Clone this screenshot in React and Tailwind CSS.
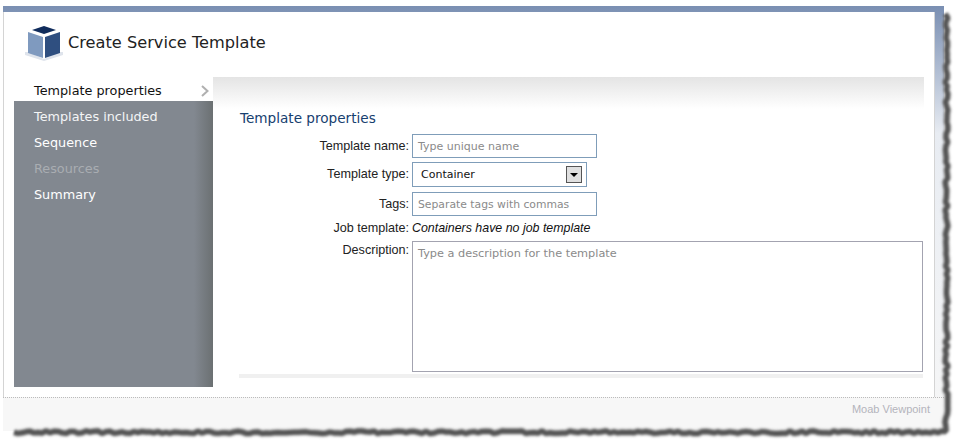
import React from 'react';

const navItems = [
  { label: 'Templates included', cls: 'text-[#f4f5f6]' },
  { label: 'Sequence', cls: 'text-white' },
  { label: 'Resources', cls: 'text-[#a9adb2]' },
  { label: 'Summary', cls: 'text-white' },
];

// torn paper edge along the right and bottom of the screenshot
function tornEdge() {
  let seed = 7;
  const rnd = () => {
    seed = (seed * 16807) % 2147483647;
    return seed / 2147483647;
  };
  const pts = [];
  for (let y = 14; y < 430; y += 4) pts.push(`${945 + rnd() * 3},${y}`);
  for (let x = 946; x > 10; x -= 4) pts.push(`${x},${431 + rnd() * 2.5}`);
  return pts.join(' ');
}

function CubeIcon() {
  return (
    <svg width="40" height="38" viewBox="0 0 40 38" className="shrink-0">
      <path d="M1 29 L4 29 L20 36 L36 29 L39 29 L39 32 L20 38 L1 32 Z" fill="#dfe4ec" />
      <path d="M8 7 L20 3 L32 7 L20 11 Z" fill="#102c5c" />
      <path d="M4 9 L19 14 L19 35 L4 30 Z" fill="#7f9abf" />
      <path d="M21 14 L36 9 L36 30 L21 35 Z" fill="#2f4f80" />
    </svg>
  );
}

function Label({ children }) {
  return <span className="w-[170px] text-right text-[12.6px] text-[#222]">{children}</span>;
}

export default function App() {
  return (
    <div className="relative h-[448px] w-[962px] overflow-hidden bg-white font-['Liberation_Sans',sans-serif]">
      <div className="ml-[3px] mt-[6px] h-[425px] w-[941px] bg-gradient-to-b from-[#7a8fb2] via-[#e8ecf2] via-30% to-[#f7f7f7] pr-[9px] pt-[6px]">
        <div className="h-[385px] border-x border-x-[#d4d4d4] bg-white">
          <div className="mb-[5px] flex h-[60px] items-center gap-[4px] pl-[20px]">
            <CubeIcon />
            <h1 className="pt-[2px] font-['DejaVu_Sans',sans-serif] text-[16.2px] text-[#222]">Create Service Template</h1>
          </div>
          <div className="ml-[10px] flex h-[310px] w-[909px]">
            <nav className="w-[199px] shrink-0 bg-[linear-gradient(to_right,#828890_0,#828890_180px,#6b7072_199px)] font-['DejaVu_Sans',sans-serif] text-[12.8px]">
              <div className="flex h-[24px] items-center justify-between bg-white pl-[20px] pr-[3px] pt-[3px] text-[#111]">
                <span>Template properties</span>
                <svg width="10" height="12" viewBox="0 0 10 12">
                  <path d="M2 1 L7.5 6 L2 11" fill="none" stroke="#b0b0b0" strokeWidth="2" />
                </svg>
              </div>
              <div className="flex flex-col pt-[3px]">
                {navItems.map((item) => (
                  <div key={item.label} className={`flex h-[26px] items-center pl-[20px] ${item.cls}`}>
                    {item.label}
                  </div>
                ))}
              </div>
            </nav>
            <main className="flex-1 bg-[linear-gradient(to_bottom,#e4e4e4_0,#ffffff_32px)]">
              <div className="pl-[26px] pr-[1px] pt-[32px]">
                <h2 className="h-[25px] pl-[1px] pt-[1px] font-['DejaVu_Sans',sans-serif] text-[13.6px] leading-[17px] text-[#17406f]">Template properties</h2>
                <div className="flex h-[24px] items-center gap-[3px]">
                  <Label>Template name:</Label>
                  <div className="flex h-[24px] w-[185px] items-center border border-[#7f9db9] pl-[5px] pt-[2px] font-['DejaVu_Sans',sans-serif] text-[11px] text-[#8a8a8a]">Type unique name</div>
                </div>
                <div className="mt-[4px] flex h-[25px] items-center gap-[3px]">
                  <Label>Template type:</Label>
                  <div className="flex h-[25px] w-[175px] items-center justify-between border border-[#7f9db9] pl-[8px] pr-[4px] font-['DejaVu_Sans',sans-serif] text-[11px] text-[#111]">
                    <span className="pt-[2px]">Container</span>
                    <span className="flex h-[17px] w-[16px] items-center justify-center border border-[#555] bg-[#e0e0e0]">
                      <span className="h-0 w-0 border-x-[4px] border-t-[4px] border-x-transparent border-t-black" />
                    </span>
                  </div>
                </div>
                <div className="mt-[5px] flex h-[24px] items-center gap-[3px]">
                  <Label>Tags:</Label>
                  <div className="flex h-[24px] w-[185px] items-center border border-[#7f9db9] pl-[5px] pt-[2px] font-['DejaVu_Sans',sans-serif] text-[10.8px] text-[#8a8a8a]">Separate tags with commas</div>
                </div>
                <div className="mt-[2px] flex h-[20px] items-center gap-[3px]">
                  <Label>Job template:</Label>
                  <span className="text-[12.4px] italic text-[#111]">Containers have no job template</span>
                </div>
                <div className="mt-[3px] flex gap-[3px]">
                  <Label>Description:</Label>
                  <div className="h-[131px] w-[511px] border border-[#a3a3b0] pl-[5px] pt-[4px] font-['DejaVu_Sans',sans-serif] text-[11.3px] text-[#8a8a8a]">Type a description for the template</div>
                </div>
                <div className="mt-[2px] h-[4px] bg-[#f0f0f0]" />
              </div>
            </main>
          </div>
        </div>
        <div className="-mr-[9px] flex h-[34px] items-start justify-end border-t border-dotted border-[#bbb] bg-[#f7f7f7] pr-[14px] pt-[3px] text-[11px] text-[#b4b4bc]">
          Moab Viewpoint
        </div>
      </div>
      <svg width="962" height="448" className="absolute left-0 top-0 blur-[1px]">
        <polyline points={tornEdge()} fill="none" stroke="#999" strokeWidth="8" strokeLinejoin="bevel" opacity="0.5" />
        <polyline points={tornEdge()} fill="none" stroke="#505050" strokeWidth="5" strokeLinejoin="bevel" opacity="0.95" />
      </svg>
    </div>
  );
}
